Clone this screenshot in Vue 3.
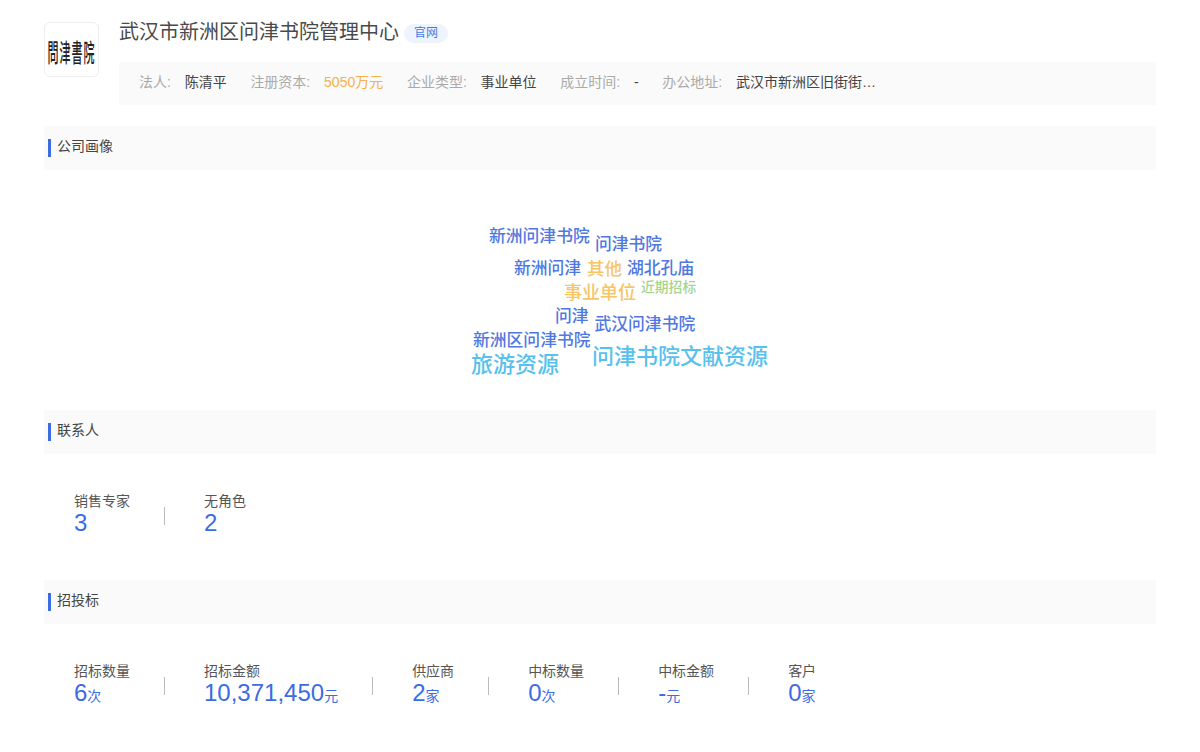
<template>
  <div class="page">
    <div class="head">
      <div class="logo"><span class="logo-text">問津書院</span></div>
      <div class="head-main">
        <div class="title-row">
          <h1 class="name">武汉市新洲区问津书院管理中心</h1>
          <span class="tag">官网</span>
        </div>
        <div class="info">
          <div v-for="item in info" :key="item.label" class="info-item">
            <span class="info-label">{{ item.label }}:</span>
            <span class="info-value" :class="{ money: item.money }">{{ item.value }}</span>
          </div>
        </div>
      </div>
    </div>

    <section class="section">
      <div class="section-title"><span class="bar"></span>公司画像</div>
      <div class="cloud">
        <span
          v-for="word in words"
          :key="word.text"
          class="word"
          :style="{ left: word.x + 'px', top: word.y + 'px', fontSize: word.size + 'px', color: word.color }"
        >{{ word.text }}</span>
      </div>
    </section>

    <section class="section">
      <div class="section-title"><span class="bar"></span>联系人</div>
      <div class="stats contacts">
        <template v-for="(stat, i) in contacts" :key="stat.label">
          <i v-if="i" class="divider"></i>
          <div class="stat">
            <div class="stat-label">{{ stat.label }}</div>
            <div class="stat-value">{{ stat.value }}</div>
          </div>
        </template>
      </div>
    </section>

    <section class="section">
      <div class="section-title"><span class="bar"></span>招投标</div>
      <div class="stats">
        <template v-for="(stat, i) in bids" :key="stat.label">
          <i v-if="i" class="divider"></i>
          <div class="stat">
            <div class="stat-label">{{ stat.label }}</div>
            <div class="stat-value">{{ stat.value }}<small>{{ stat.unit }}</small></div>
          </div>
        </template>
      </div>
    </section>
  </div>
</template>

<script setup>
const info = [
  { label: '法人', value: '陈清平' },
  { label: '注册资本', value: '5050万元', money: true },
  { label: '企业类型', value: '事业单位' },
  { label: '成立时间', value: '-' },
  { label: '办公地址', value: '武汉市新洲区旧街街…' },
]

const blue = '#4f78e2'
const orange = '#f6c568'
const green = '#a6d48c'
const sky = '#57c1ee'

// word cloud: positions are relative to the cloud box
const words = [
  { text: '新洲问津书院', x: 445, y: 56, size: 16.8, color: blue },
  { text: '问津书院', x: 551, y: 64, size: 16.8, color: blue },
  { text: '新洲问津', x: 470, y: 88, size: 16.8, color: blue },
  { text: '其他', x: 543, y: 88, size: 17.5, color: orange },
  { text: '湖北孔庙', x: 583, y: 88, size: 16.8, color: blue },
  { text: '事业单位', x: 520, y: 112, size: 18, color: orange },
  { text: '近期招标', x: 597, y: 109, size: 13.8, color: green },
  { text: '问津', x: 511, y: 136, size: 16.8, color: blue },
  { text: '武汉问津书院', x: 550.5, y: 144, size: 16.8, color: blue },
  { text: '新洲区问津书院', x: 429, y: 160, size: 16.8, color: blue },
  { text: '旅游资源', x: 427, y: 180, size: 22, color: sky },
  { text: '问津书院文献资源', x: 548, y: 172, size: 22, color: sky },
]

const contacts = [
  { label: '销售专家', value: '3' },
  { label: '无角色', value: '2' },
]

const bids = [
  { label: '招标数量', value: '6', unit: '次' },
  { label: '招标金额', value: '10,371,450', unit: '元' },
  { label: '供应商', value: '2', unit: '家' },
  { label: '中标数量', value: '0', unit: '次' },
  { label: '中标金额', value: '-', unit: '元' },
  { label: '客户', value: '0', unit: '家' },
]
</script>

<style scoped>
.page {
  width: 1112px;
  margin: 0 auto;
  padding-top: 20px;
  font-family: "Liberation Sans", "Noto Sans CJK SC", sans-serif;
  color: #333;
}

.head {
  display: flex;
  gap: 20px;
}

.logo {
  flex: none;
  width: 55px;
  height: 55px;
  margin-top: 2px;
  box-sizing: border-box;
  border: 1px solid #eee;
  border-radius: 6px;
  display: flex;
  align-items: center;
  justify-content: center;
  overflow: hidden;
}

.logo-text {
  font-family: "Noto Sans CJK TC", sans-serif;
  font-size: 11px;
  font-weight: 500;
  line-height: 12px;
  letter-spacing: 1px;
  white-space: nowrap;
  color: #222;
  transform: scaleY(2.3);
}

.head-main {
  flex: 1;
}

.title-row {
  display: flex;
  align-items: center;
  height: 24px;
}

.name {
  margin: 0;
  font-size: 20px;
  font-weight: 400;
  line-height: 24px;
  color: #4a4a4a;
}

.tag {
  margin: 3px 0 0 5px;
  width: 44px;
  height: 19px;
  line-height: 19px;
  border-radius: 10px;
  background: #eef4fd;
  color: #3d7be8;
  font-size: 12px;
  text-align: center;
}

.info {
  display: flex;
  align-items: center;
  height: 43px;
  box-sizing: border-box;
  margin-top: 18px;
  padding: 0 0 6px 20px;
  background: #fafafa;
  font-size: 14px;
}

.info-item {
  display: flex;
  align-items: baseline;
  margin-right: 23.7px;
}

.info-label {
  color: #aaa;
  margin-right: 13.8px;
}

.info-value {
  color: #444;
}

.money {
  color: #f7b04a;
}

.section-title {
  display: flex;
  align-items: flex-start;
  height: 44px;
  box-sizing: border-box;
  padding: 11px 0 0 4px;
  background: #fafafa;
  font-size: 14px;
  line-height: 18px;
  color: #444;
}

.section:first-of-type {
  margin-top: 21px;
}

.bar {
  width: 3px;
  height: 18px;
  margin: 2px 6px 0 0;
  background: #3b6ce3;
}

.cloud {
  position: relative;
  height: 240px;
}

.word {
  position: absolute;
  line-height: 1.1;
  font-family: "Noto Sans CJK SC", sans-serif;
  font-weight: 500;
  white-space: nowrap;
}

.stats {
  display: flex;
  align-items: center;
  padding: 40px 0 43px 30px;
}

.stat-label {
  font-size: 14px;
  line-height: 14px;
  color: #555;
}

.stat-value {
  margin-top: 1px;
  font-size: 24px;
  line-height: 28px;
  color: #3b6ce3;
}

.stat-value small {
  font-size: 14px;
  line-height: 1;
}

.divider {
  flex: none;
  width: 1px;
  height: 18px;
  margin: 0 39px 0 34px;
  background: #bbb;
}
</style>

<style>
html, body {
  background: #fff;
}
</style>
